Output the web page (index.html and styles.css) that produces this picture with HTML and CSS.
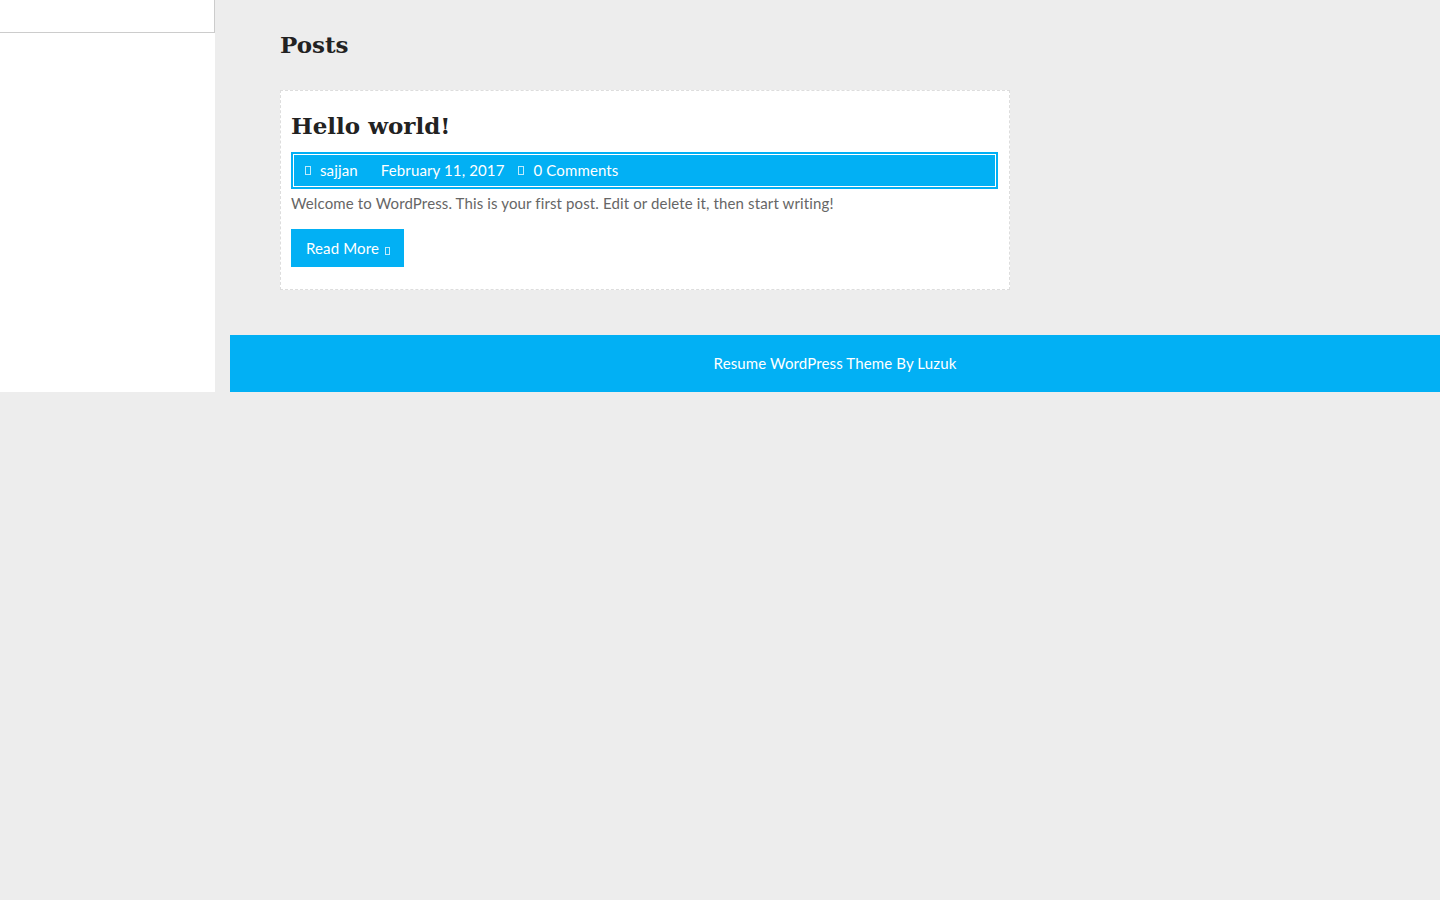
FILE: index.html
```html
<!DOCTYPE html>
<html lang="en">
<head>
<meta charset="utf-8">
<title>Posts</title>
<link rel="stylesheet" href="styles.css">
</head>
<body>
<div class="page">
  <aside class="sidebar">
    <div class="sidebar-top"></div>
  </aside>
  <div class="main">
    <div class="content">
      <h1 class="page-title">Posts</h1>
      <article class="card">
        <h2 class="post-title">Hello world!</h2>
        <div class="meta">
          <span class="tofu"></span><span class="author">sajjan</span>
          <span class="date">February 11, 2017</span>
          <span class="tofu"></span><span class="comments">0 Comments</span>
        </div>
        <p class="excerpt">Welcome to WordPress. This is your first post. Edit or delete it, then start writing!</p>
        <a class="btn" href="#">Read More <span class="tofu small"></span></a>
      </article>
    </div>
    <footer class="footer">Resume WordPress Theme By Luzuk</footer>
  </div>
</div>
</body>
</html>
```
FILE: styles.css
```css
html, body {
  margin: 0;
  padding: 0;
  background: #ededed;
  font-family: Lato, "Open Sans", sans-serif;
  font-size: 15px;
  letter-spacing: 0.13px;
}
.page {
  display: flex;
  align-items: stretch;
}
.sidebar {
  width: 215px;
  flex: none;
  background: #fff;
}
.sidebar-top {
  height: 32px;
  border-right: 1px solid #ccc;
  border-bottom: 1px solid #ccc;
}
.main {
  flex: 1;
  margin-left: 15px;
}
.content {
  padding: 25px 50px 0;
}
.page-title {
  margin: 0;
  font-family: "DejaVu Serif", serif;
  font-weight: bold;
  font-size: 23px;
  line-height: 40px;
  letter-spacing: 0;
  color: #222;
}
.card {
  margin-top: 25px;
  width: 708px;
  background: #fff;
  border: 1px dashed #ddd;
  padding: 10px 10px 22px;
}
.post-title {
  margin: 5px 0 0;
  font-family: "DejaVu Serif", serif;
  font-weight: bold;
  font-size: 23px;
  line-height: 40px;
  letter-spacing: 0;
  color: #222;
}
.meta {
  margin-top: 6px;
  margin-right: 1px;
  background: #02b0f4;
  border: 2px solid #02b0f4;
  box-shadow: inset 0 0 0 1px #fff;
  height: 33px;
  line-height: 33px;
  padding: 0 12px;
  color: #fff;
  display: flex;
  align-items: center;
}
.tofu {
  display: inline-block;
  height: 9px;
  border: 1px solid rgba(255, 255, 255, 0.75);
  box-sizing: border-box;
  width: 6px;
}
.author { margin-left: 9px; }
.date { margin-left: 23px; margin-right: 13px; }
.comments { margin-left: 10px; }
.excerpt {
  margin: 2px 0 0;
  line-height: 24px;
  color: #666;
}
.btn {
  display: inline-block;
  margin-top: 14px;
  height: 38px;
  line-height: 38px;
  padding: 0 14px 0 15px;
  background: #02b0f4;
  color: #fff;
  text-decoration: none;
}
.tofu.small {
  width: 5px;
  height: 8px;
  margin-left: 2px;
  vertical-align: -1px;
}
.footer {
  margin-top: 45px;
  height: 57px;
  line-height: 57px;
  background: #02b0f4;
  color: #fff;
  text-align: center;
}
```
